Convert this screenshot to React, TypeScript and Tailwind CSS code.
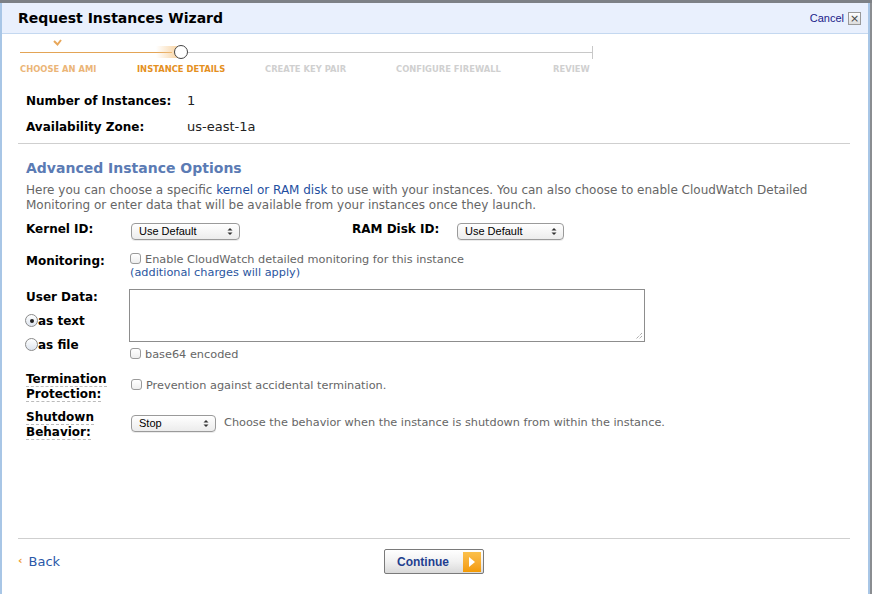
import React from 'react';

const font = { fontFamily: '"DejaVu Sans", Verdana, sans-serif' };

function FakeSelect({ value, width }: { value: string; width: string }) {
  return (
    <div
      className={`flex items-center justify-between h-[17px] rounded-[4px] border border-[#9a9a9a] bg-gradient-to-b from-white to-[#ececec] pl-[7px] pr-[6px] text-[11px] text-black shadow-[0_1px_0_rgba(0,0,0,0.08)] ${width}`}
      style={{ fontFamily: '"Liberation Sans", Arial, sans-serif' }}
    >
      <span>{value}</span>
      <svg width="6" height="9" viewBox="0 0 6 9">
        <path d="M0.5 3.5 L3 1 L5.5 3.5 Z" fill="#333" />
        <path d="M0.5 5.5 L3 8 L5.5 5.5 Z" fill="#333" />
      </svg>
    </div>
  );
}

function Check() {
  return (
    <span className="inline-block w-[11px] h-[11px] rounded-[3px] border border-[#9a9a9a] bg-gradient-to-b from-white to-[#eee] mr-[4px] align-[-1px]" />
  );
}

function Radio({ on }: { on?: boolean }) {
  return (
    <span className="inline-flex items-center justify-center w-[13px] h-[13px] rounded-full border border-[#8a8a8a] bg-gradient-to-b from-white to-[#dde4ee]">
      {on && <span className="w-[4px] h-[4px] rounded-full bg-[#222]" />}
    </span>
  );
}

function Progress() {
  return (
    <div className="ml-[18px] w-[574px]">
      <div className="relative h-[24px]">
        {/* check mark on completed step */}
        <svg className="absolute left-[33px] top-[2px]" width="9" height="7" viewBox="0 0 9 7">
          <path d="M1 2 L4.5 5.5 L8 1" stroke="#e8a75a" strokeWidth="2" fill="none" />
        </svg>
        <div className="absolute left-0 top-[15px] h-[1px] w-[152px] bg-[#e3a456]" />
        <div className="absolute left-[136px] top-[9px] h-[12px] w-[22px] bg-gradient-to-r from-transparent to-[#f6c98d] opacity-80" />
        <div className="absolute left-[168px] top-[15px] h-[1px] w-[404px] bg-[#c8c8c8]" />
        <div className="absolute left-[572px] top-[9px] h-[13px] w-[1px] bg-[#c8c8c8]" />
        <div className="absolute left-[154px] top-[8px] h-[14px] w-[14px] rounded-full border-[1.5px] border-[#444] bg-white" />
      </div>
      <div className="flex text-[8.4px] font-bold uppercase mt-[2px]">
        <span className="w-[117px] text-[#ebb577]">Choose an AMI</span>
        <span className="w-[128px] text-[#e4901f]">Instance Details</span>
        <span className="w-[131px] text-[#d0d0d0]">Create Key Pair</span>
        <span className="w-[157px] text-[#d0d0d0]">Configure Firewall</span>
        <span className="text-[#d0d0d0]">Review</span>
      </div>
    </div>
  );
}

export default function App() {
  return (
    <div className="w-[872px] h-[594px] overflow-hidden bg-[#8a8d91] flex flex-col" style={font}>
      <div className="h-[3px] bg-[#7d8186]" />
      <div className="flex-1 flex flex-col bg-white border-l-[2px] border-[#a8c6e6] border-r-[2px] mr-[2px]">
        {/* header */}
        <div className="h-[31px] flex items-center justify-between bg-[#e9f0fd] border-b border-[#c4d8f0] pl-[16px] pr-[7px]">
          <h1 className="text-[14px] font-bold text-black">Request Instances Wizard</h1>
          <div className="flex items-center gap-[4px]">
            <span className="text-[11px] text-[#1b1c8a]" style={{ fontFamily: '"Liberation Sans", Arial, sans-serif' }}>
              Cancel
            </span>
            <span className="w-[13px] h-[13px] flex items-center justify-center border border-[#999] bg-gradient-to-b from-white to-[#ddd] text-[11px] leading-none text-[#444]">
              ×
            </span>
          </div>
        </div>

        <div className="pt-[3px]">
          <Progress />
        </div>

        {/* summary */}
        <div className="pl-[24px] mt-[17px]">
          <div className="flex h-[17px] items-center">
            <span className="w-[161px] text-[12px] font-bold text-black">Number of Instances:</span>
            <span className="text-[13px] text-[#222]">1</span>
          </div>
          <div className="flex h-[17px] items-center mt-[9px]">
            <span className="w-[161px] text-[12px] font-bold text-black">Availability Zone:</span>
            <span className="text-[13px] text-[#222]">us-east-1a</span>
          </div>
        </div>

        <div className="ml-[16px] mr-[18px] mt-[7px] border-t border-[#cfcfcf]" />

        <div className="pl-[24px] pr-[20px]">
          <h2 className="mt-[14px] text-[14px] font-bold text-[#5b7bb4]">Advanced Instance Options</h2>
          <p className="mt-[4px] text-[12px] leading-[15px] text-[#666]">
            Here you can choose a specific <span className="text-[#1f4f9f]">kernel or RAM disk</span> to use with your instances. You can also choose to enable CloudWatch Detailed Monitoring or enter data that will be available from your instances once they launch.
          </p>

          {/* kernel / ram disk */}
          <div className="flex items-center mt-[10px] h-[18px]">
            <span className="w-[105px] -mt-[6px] text-[12px] font-bold">Kernel ID:</span>
            <FakeSelect value="Use Default" width="w-[109px]" />
            <span className="ml-[112px] -mt-[6px] w-[105px] text-[12px] font-bold">RAM Disk ID:</span>
            <FakeSelect value="Use Default" width="w-[107px]" />
          </div>

          {/* monitoring */}
          <div className="flex mt-[12px]">
            <span className="w-[104px] text-[12px] font-bold leading-[16px]">Monitoring:</span>
            <div className="text-[11.3px] leading-[13px]">
              <div className="text-[#666]">
                <Check />
                Enable CloudWatch detailed monitoring for this instance
              </div>
              <div className="text-[#2a55a0]">(additional charges will apply)</div>
            </div>
          </div>

          {/* user data */}
          <div className="flex mt-[10px]">
            <div className="w-[103px] text-[12px] font-bold">
              <div className="h-[16px] -mt-[1px]">User Data:</div>
              <div className="flex items-center h-[16px] mt-[9px] -ml-[1px]">
                <Radio on />
                <span>as text</span>
              </div>
              <div className="flex items-center h-[16px] mt-[8px] -ml-[1px]">
                <Radio />
                <span>as file</span>
              </div>
            </div>
            <div>
              <div className="relative w-[516px] h-[53px] border border-[#8d8d8d] bg-white">
                <svg className="absolute right-[1px] bottom-[1px]" width="8" height="8" viewBox="0 0 8 8">
                  <path d="M7 1 L1 7 M7 4 L4 7" stroke="#888" strokeWidth="1" strokeDasharray="1 1" />
                </svg>
              </div>
              <div className="mt-[6px] text-[11.3px] text-[#666] leading-[13px] ml-[1px]">
                <Check />
                base64 encoded
              </div>
            </div>
          </div>

          {/* termination */}
          <div className="flex items-center mt-[11px]">
            <div className="w-[104px] text-[12px] font-bold leading-[14px]">
              <div className="inline-block border-b border-dashed border-[#bbb]">Termination</div>
              <div className="inline-block border-b border-dashed border-[#bbb]">Protection:</div>
            </div>
            <div className="text-[11.3px] text-[#666] ml-[1px]">
              <Check />
              Prevention against accidental termination.
            </div>
          </div>

          {/* shutdown */}
          <div className="flex items-center mt-[8px]">
            <div className="w-[105px] text-[12px] font-bold leading-[14px]">
              <div className="inline-block border-b border-dashed border-[#bbb]">Shutdown</div>
              <div className="inline-block border-b border-dashed border-[#bbb]">Behavior:</div>
            </div>
            <div className="flex items-center -mt-[2px]">
              <FakeSelect value="Stop" width="w-[85px]" />
              <span className="ml-[8px] text-[11.3px] text-[#666]">
                Choose the behavior when the instance is shutdown from within the instance.
              </span>
            </div>
          </div>
        </div>

        <div className="flex-1" />

        <div className="ml-[16px] mr-[18px] border-t border-[#cfcfcf]" />
        <div className="h-[55px] pt-[10px] pl-[16px]">
          <div className="flex items-center h-[25px]">
            <div className="w-[366px] flex items-center">
              <span className="text-[11px] text-[#ef9b2b] font-bold mr-[6px]">‹</span>
              <span className="text-[13px] text-[#2b59a8]">Back</span>
            </div>
            <div className="flex items-center justify-between w-[100px] h-[25px] border border-[#7a7a7a] rounded-[2px] bg-gradient-to-b from-white via-[#f1f1f1] to-[#d9d9d9] pl-[12px] pr-[2px]">
              <span className="text-[12px] font-bold text-[#1f3f8f]" style={{ fontFamily: '"Liberation Sans", Arial, sans-serif' }}>
                Continue
              </span>
              <span className="w-[18px] h-[20px] bg-gradient-to-b from-[#fbc04a] to-[#f39a00] flex items-center justify-center">
                <svg width="8" height="12" viewBox="0 0 8 12">
                  <path d="M1 1 L7 6 L1 11 Z" fill="white" />
                </svg>
              </span>
            </div>
          </div>
        </div>
      </div>
    </div>
  );
}
